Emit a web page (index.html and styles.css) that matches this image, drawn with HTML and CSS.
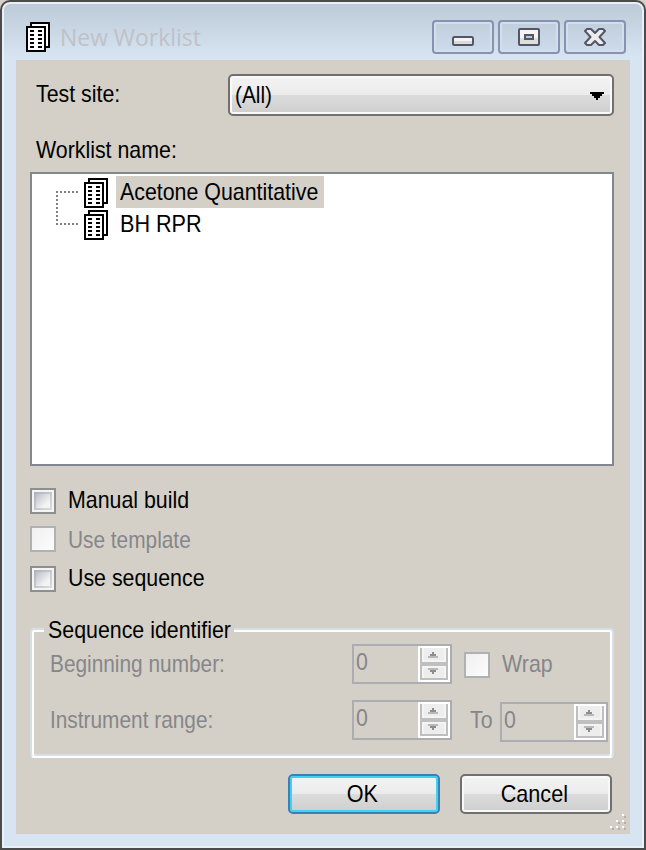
FILE: index.html
```html
<!DOCTYPE html>
<html lang="en">
<head>
<meta charset="utf-8">
<title>New Worklist</title>
<link rel="stylesheet" href="styles.css">
</head>
<body>
<svg class="defs" width="0" height="0">
  <symbol id="sheets" viewBox="0 0 12 15">
    <path fill="#000" d="M2 0h10v13h-2v2H0V2h2z"/>
    <path fill="#fff" d="M3 1h8v11h-1V2H3zM1 3h8v11H1z"/>
    <path fill="#000" d="M2 4h2v1H2zM6 4h2v1H6zM2 6h2v1H2zM6 6h2v1H6zM2 8h2v1H2zM6 8h2v1H6zM2 10h2v1H2zM6 10h2v1H6zM2 12h2v1H2zM6 12h2v1H6z"/>
  </symbol>
  <symbol id="spin" viewBox="0 0 16 18">
    <path fill="#fff" d="M0 0h16v18H0z"/>
    <path fill="#bfbfbf" d="M1 1h14v16H1z"/>
    <path fill="#f4f4f4" d="M2 1h12v7H2zM2 10h12v6H2z"/>
    <path fill="#ededed" d="M3 1h10v6H3zM3 11h10v5H3z"/>
    <path fill="#b9b9bb" d="M5 5h5v1H5zM5 11h5v1H5z"/>
    <path fill="#8c8c91" d="M7 3h1v1H7zM6 4h3v1H6zM6 12h3v1H6zM7 13h1v1H7z"/>
  </symbol>
</svg>
<div class="window">
  <header class="titlebar">
    <svg class="sheets" shape-rendering="crispEdges"><use href="#sheets"/></svg>
    <h1 class="title">New Worklist</h1>
    <div class="controls">
      <button class="control" aria-label="Minimize"><svg width="22" height="18"><rect x="1" y="9" width="20" height="8" rx="1.5" fill="#f4f4f4" stroke="#535666" stroke-width="2"/><path d="M2 13h18v3H2z" fill="#dadada"/></svg></button>
      <button class="control" aria-label="Maximize"><svg width="22" height="18"><path d="M2 1h18q1 0 1 1v14q0 1-1 1H2q-1 0-1-1V2q0-1 1-1z" fill="#f4f4f4" stroke="#535666" stroke-width="2"/><path d="M2 10h18v6H2z" fill="#dedede"/><rect x="7" y="7" width="8" height="4" fill="#b4c8dc" stroke="#535666" stroke-width="2"/></svg></button>
      <button class="control" aria-label="Close"><svg width="22" height="18"><path d="M3 1h4l4 4 4-4h4l2 2-5.5 6 5.5 6-2 2h-4l-4-4-4 4H3l-2-2 5.500-6L1 3z" fill="#ececec" stroke="#535666" stroke-width="2" stroke-linejoin="round"/></svg></button>
    </div>
  </header>
  <main class="client">
    <div class="site-row">
      <span class="text label">Test site:</span>
      <div class="combo"><span class="text tight">(All)</span><svg class="arrow" width="14" height="8" shape-rendering="crispEdges"><path d="M0 0h14v2h-2v2h-2v2H8v2H6V6H4V4H2V2H0z"/></svg></div>
    </div>
    <div class="list-label"><span class="text label">Worklist name:</span></div>
    <div class="list">
      <svg class="branch" width="24" height="36" shape-rendering="crispEdges"><path d="M0 1h22M1 4v32M4 33h18" fill="none" stroke="#808080" stroke-width="2" stroke-dasharray="2 2"/></svg>
      <div class="items">
        <div class="item"><svg class="sheets" shape-rendering="crispEdges"><use href="#sheets"/></svg><div class="name selected"><span class="text">Acetone Quantitative</span></div></div>
        <div class="item"><svg class="sheets" shape-rendering="crispEdges"><use href="#sheets"/></svg><div class="name"><span class="text loose">BH RPR</span></div></div>
      </div>
    </div>
    <div class="checks">
      <div class="check"><i class="box"></i><span class="text raised">Manual build</span></div>
      <div class="check"><i class="box off"></i><span class="text dim tight">Use template</span></div>
      <div class="check last"><i class="box"></i><span class="text raised">Use sequence</span></div>
    </div>
    <section class="group">
      <div class="legend"><span class="text">Sequence identifier</span></div>
      <div class="fields">
        <span class="text dim caption tight">Beginning number:</span>
        <div class="number"><span class="text dim">0</span><svg class="spin" shape-rendering="crispEdges"><use href="#spin"/></svg></div>
        <i class="box off wrap-box"></i><span class="text dim wrap-text">Wrap</span>
      </div>
      <div class="fields second">
        <span class="text dim caption tight">Instrument range:</span>
        <div class="number"><span class="text dim">0</span><svg class="spin" shape-rendering="crispEdges"><use href="#spin"/></svg></div>
        <span class="text dim to">To</span>
        <div class="number wide"><span class="text dim">0</span><svg class="spin" shape-rendering="crispEdges"><use href="#spin"/></svg></div>
      </div>
    </section>
    <div class="actions">
      <button class="push default"><span class="text">OK</span></button>
      <button class="push"><span class="text">Cancel</span></button>
    </div>
    <svg class="grip" width="16" height="16" shape-rendering="crispEdges"><path fill="#fff" d="M12 0h2v2h-2zM6 6h2v2H6zM12 6h2v2h-2zM0 12h2v2H0zM6 12h2v2H6zM12 12h2v2h-2z"/><path fill="#b5b1aa" d="M14 2h2v2h-2zM8 8h2v2H8zM14 8h2v2h-2zM2 14h2v2H2zM8 14h2v2H8zM14 14h2v2h-2z"/></svg>
  </main>
</div>
</body>
</html>
```

FILE: styles.css
```css
* { box-sizing: border-box; }
body { margin: 0; background: #d4d0c8; font: 24px/28px "Liberation Sans", sans-serif; color: #000; }
svg { display: block; flex: none; }
button { font: inherit; color: inherit; padding: 0; }
.defs { position: absolute; }
.window {
  width: 646px; height: 850px; border: 2px solid #4b4b4b; border-radius: 10px 10px 0 0;
  box-shadow: inset 0 0 0 2px #ebeff6; padding: 2px 14px 14px;
  background: linear-gradient(#bdcbd8 2px, #d7e4f2 56px);
}
.titlebar { height: 56px; display: flex; align-items: flex-start; padding: 16px 4px 0 10px; }
.sheets { width: 24px; height: 30px; }
.titlebar .sheets { margin-top: 2px; }
.title {
  margin: 0 0 0 10px; font: 24px/34px "Open Sans", sans-serif; color: #c0c1c7;
  white-space: nowrap; transform: scaleX(.955); transform-origin: left;
}
.controls { display: flex; gap: 4px; margin-left: auto; }
.control {
  width: 62px; height: 34px; display: flex; align-items: center; justify-content: center;
  border: 2px solid #8593b0; border-radius: 4px; box-shadow: inset 0 0 0 2px #d3deed;
  background: linear-gradient(#c1cedb, #cddbec);
}
.client { height: 774px; background: #d4d0c8; padding: 14px 16px 0 14px; position: relative; }
.text { display: block; white-space: nowrap; transform: scaleX(.89); transform-origin: left; flex: none; }
.tight { transform: scaleX(.868); }
.loose { transform: scaleX(.9); }
.dim { color: #86868a; }
.site-row { display: flex; height: 42px; justify-content: space-between; }
.label { margin: 6px 0 0 6px; }
.combo {
  width: 386px; height: 42px; display: flex; justify-content: space-between; align-items: center;
  padding: 0 8px 0 5px; border: 2px solid #707070; border-radius: 5px;
  box-shadow: inset 0 0 0 2px #f9f9f9;
  background: linear-gradient(#f3f3f3, #ebebeb 50%, #dcdcdc 50%, #cecece);
}
.arrow { margin-top: 2px; }
.list-label { height: 56px; padding-top: 14px; }
.list { height: 294px; background: #fff; border: 2px solid #828790; display: flex; padding: 2px 0 0 24px; }
.branch { margin: 15px 4px 0 0; }
.item { display: flex; height: 32px; }
.item .sheets { margin-top: 2px; }
.name { margin-left: 8px; padding: 2px 0 0 4px; height: 32px; }
.selected { width: 208px; background: #d4d0c8; }
.checks { padding-top: 22px; }
.check { display: flex; height: 26px; gap: 12px; margin-bottom: 12px; }
.check.last { margin: 14px 0 0; }
.raised { margin-top: -2px; }
.box {
  width: 26px; height: 26px; flex: none; border: 2px solid #8e8f8f;
  background: linear-gradient(135deg, #bcc0c9, #f4f4f4 75%) 4px 4px / 14px 14px no-repeat,
    linear-gradient(135deg, #adb2bd, #dcdcdc) 2px 2px / 18px 18px no-repeat, #f4f4f4;
}
.off { border-color: #b1b1b1; background: linear-gradient(135deg, #f0f0f0, #fcfcfc); }
.group {
  height: 130px; margin-top: 36px; border: 2px solid #d5dfe5; border-bottom-color: #fff; border-radius: 4px;
  box-shadow: inset 2px 0 #fff, inset -2px 0 #fff, inset 0 2px #fff, inset 0 -2px #d5dfe5;
  padding-left: 12px;
}
.legend { width: 190px; height: 28px; margin-top: -14px; padding-left: 4px; background: #d4d0c8; }
.fields { display: flex; height: 40px; }
.second { margin-top: 16px; }
.caption { width: 302px; margin: 6px 0 0 6px; }
.number { width: 100px; height: 40px; border: 2px solid #abadb3; display: flex; justify-content: space-between; }
.number .text { margin: 2px 0 0 2px; }
.spin { width: 32px; height: 36px; }
.wrap-box { margin: 8px 0 0 12px; }
.wrap-text { margin: 6px 0 0 12px; }
.to { width: 30px; margin: 6px 0 0 18px; }
.wide { width: 108px; margin-top: 2px; }
.actions { display: flex; justify-content: flex-end; gap: 20px; padding: 16px 2px 0 0; }
.push {
  width: 152px; height: 40px; border: 2px solid #707070; border-radius: 5px;
  box-shadow: inset 0 0 0 2px #f8f8f8; display: flex; align-items: center; justify-content: center;
  background: linear-gradient(#f3f3f3, #ebebeb 50%, #dcdcdc 50%, #cecece);
}
.push .text { transform: translateX(-2px) scaleX(.9); transform-origin: center; }
.default { border-color: #3c7fb1; box-shadow: inset 0 0 0 2px #40d0f4; }
.grip { position: absolute; right: 4px; bottom: 4px; }
```
